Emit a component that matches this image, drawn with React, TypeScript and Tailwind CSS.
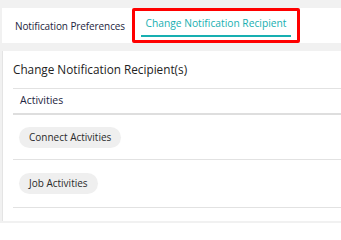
export default function App() {
  return (
    <div className="w-[341px] h-[223px] overflow-hidden bg-[#f1f1f1] pt-2 font-['Open_Sans','Liberation_Sans',sans-serif]">
      <div className="ml-[2px] flex h-[35px] items-stretch bg-white">
        <span className="ml-[13px] self-center pt-[1px] text-[10px] tracking-[-0.1px] text-[#1d2540]">Notification Preferences</span>
        <div className="ml-[7px] flex w-[168px] flex-col justify-center rounded-[2px] border-[3px] border-[#ff0000] px-[6px]">
          <div className="border-b-2 border-[#17afb1] pb-[3px] pt-[2px] text-center text-[10.25px] font-medium text-[#17afb1]">
            Change Notification Recipient
          </div>
        </div>
      </div>

      <div className="mt-2 ml-[2px] h-[170px] border-l border-[#e4e4e4] bg-white">
        <div className="flex h-[37px] items-center pl-[10px] text-[11.75px] font-medium text-[#222]">
          Change Notification Recipient(s)
        </div>
        <div className="ml-[10px] border-t border-[#e2e2e2]">
          <div className="flex h-[24px] items-center pl-[7px] text-[10.5px] font-medium text-[#1d2540]">Activities</div>
          <div className="border-t-2 border-[#dedede]" />
          <div className="flex h-[44px] items-center pl-[6px]">
            <span className="flex h-[21px] items-center rounded-full bg-[#efefef] px-[10px] text-[10px] text-[#2a2a2a]">Connect Activities</span>
          </div>
          <div className="border-t border-[#e2e2e2]" />
          <div className="flex h-[47px] items-center pl-[6px]">
            <span className="flex h-[21px] items-center rounded-full bg-[#efefef] px-[10px] text-[10px] text-[#2a2a2a]">Job Activities</span>
          </div>
          <div className="border-t border-[#e2e2e2]" />
        </div>
      </div>
    </div>
  );
}
